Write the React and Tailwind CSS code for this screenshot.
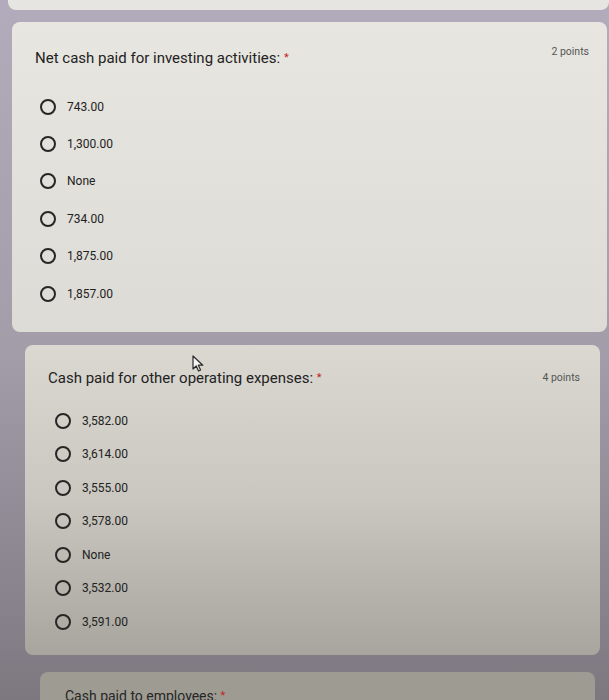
import React from 'react';

const q1 = ['743.00', '1,300.00', 'None', '734.00', '1,875.00', '1,857.00'];
const q2 = ['3,582.00', '3,614.00', '3,555.00', '3,578.00', 'None', '3,532.00', '3,591.00'];

const Option = ({ label, rowH }) => (
    <div className={`flex items-center gap-[11px] ${rowH}`}>
        <span className="w-[16px] h-[16px] rounded-full border-2 border-[#262626] shrink-0"></span>
        <span className="text-[12px] text-[#222]">{label}</span>
    </div>
);

const App = () => {
    return (
        <div
            className="relative h-[700px] w-[609px] overflow-hidden bg-gradient-to-b from-[#b2abbb] via-[#a39daa] to-[#7d7880] flex flex-col"
            style={{ fontFamily: 'Roboto, "Liberation Sans", sans-serif' }}
        >
            {/* previous card, cut off */}
            <div className="ml-[8px] h-[10px] shrink-0 rounded-b-lg bg-[#e7e5e1]"></div>

            {/* Question 1 */}
            <div className="mt-[12px] ml-[12px] mr-[2px] h-[310px] shrink-0 rounded-lg bg-gradient-to-b from-[#e8e6e1] to-[#dddbd5] pl-[23px] pr-[18px] pt-[26px]">
                <div className="flex justify-between items-start">
                    <div className="text-[15px] text-[#222] leading-[20px]">
                        Net cash paid for investing activities: <span className="text-[#c5221f] text-[11px] align-top">*</span>
                    </div>
                    <div className="text-[10.5px] text-[#555] leading-[14px] -mt-[3px]">2 points</div>
                </div>
                <div className="mt-[20px] pl-[5px] flex flex-col">
                    {q1.map((o) => (
                        <Option key={o} label={o} rowH="h-[37.4px]" />
                    ))}
                </div>
            </div>

            {/* Question 2 */}
            <div className="mt-[13px] ml-[25px] mr-[9px] h-[310px] shrink-0 rounded-lg bg-gradient-to-b from-[#dad8d1] via-[#c9c7bf] to-[#a7a59d] pl-[23px] pr-[20px] pt-[23px]">
                <div className="flex justify-between items-start">
                    <div className="text-[15px] text-[#222] leading-[20px]">
                        Cash paid for other operating expenses: <span className="text-[#c5221f] text-[11px] align-top">*</span>
                    </div>
                    <div className="text-[10.5px] text-[#555] leading-[14px] mt-[3px]">4 points</div>
                </div>
                <div className="mt-[16px] pl-[7px] flex flex-col">
                    {q2.map((o) => (
                        <Option key={o} label={o} rowH="h-[33.5px]" />
                    ))}
                </div>
            </div>

            {/* Question 3, cut off */}
            <div className="mt-[17px] ml-[40px] mr-[14px] h-[80px] shrink-0 rounded-lg bg-[#9d9b92] pl-[25px] pt-[14px]">
                <div className="text-[14px] text-[#262626] leading-[20px]">
                    Cash paid to employees: <span className="text-[#c5221f] text-[11px] align-top">*</span>
                </div>
            </div>

            {/* mouse cursor */}
            <svg className="absolute left-[192px] top-[355px]" width="13" height="17" viewBox="0 0 13 17">
                <path d="M1 1 L1 14 L4.2 11 L6.6 16 L8.6 15 L6.3 10.2 L10.8 10.2 Z" fill="#f4f4f4" stroke="#2a2a2a" strokeWidth="1.2" strokeLinejoin="round" />
            </svg>
        </div>
    );
};

export default App;
